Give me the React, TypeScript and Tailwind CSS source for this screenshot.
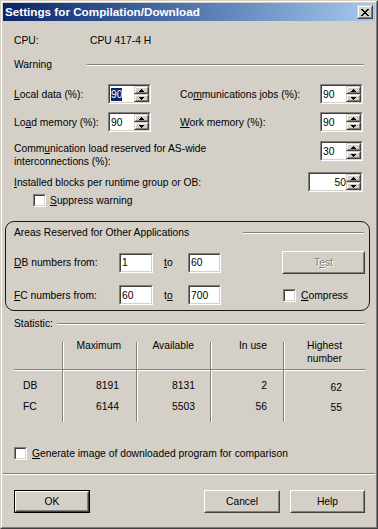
const sunkenOuter = "border border-t-[#808080] border-l-[#808080] border-r-white border-b-white";
const sunkenInner = "border border-t-[#404040] border-l-[#404040] border-r-[#d4d0c8] border-b-[#d4d0c8]";
const raisedOuter = "border border-t-[#d4d0c8] border-l-[#d4d0c8] border-r-[#404040] border-b-[#404040]";
const raisedInner = "border border-t-white border-l-white border-r-[#808080] border-b-[#808080]";

function Arrow({ up }: { up?: boolean }) {
  return (
    <svg width="5" height="3" viewBox="0 0 5 3" shapeRendering="crispEdges" fill="#000">
      {up ? (
        <>
          <rect x="2" y="0" width="1" height="1" />
          <rect x="1" y="1" width="3" height="1" />
          <rect x="0" y="2" width="5" height="1" />
        </>
      ) : (
        <>
          <rect x="0" y="0" width="5" height="1" />
          <rect x="1" y="1" width="3" height="1" />
          <rect x="2" y="2" width="1" height="1" />
        </>
      )}
    </svg>
  );
}

function SpinHalf({ up }: { up?: boolean }) {
  return (
    <div className={`${raisedOuter} h-[8px]`}>
      <div className={`${raisedInner} h-full bg-[#d4d0c8] flex items-center justify-center`}>
        <Arrow up={up} />
      </div>
    </div>
  );
}

function SpinField({
  value,
  className,
  selected,
  alignRight,
}: {
  value: string;
  className: string;
  selected?: boolean;
  alignRight?: boolean;
}) {
  return (
    <div className={`${sunkenOuter} ${className} h-[20px] shrink-0`}>
      <div className={`${sunkenInner} h-full flex bg-white`}>
        <div className={`flex-1 flex items-center ${alignRight ? "justify-end" : "pl-[1px]"}`}>
          <span className={selected ? "bg-[#0a246a] text-white" : ""}>{value}</span>
        </div>
        <div className="w-[15px] flex flex-col">
          <SpinHalf up />
          <SpinHalf />
        </div>
      </div>
    </div>
  );
}

function Edit({ value, className }: { value: string; className: string }) {
  return (
    <div className={`${sunkenOuter} ${className} h-[20px] shrink-0`}>
      <div className={`${sunkenInner} h-full bg-white flex items-center pl-[1px]`}>{value}</div>
    </div>
  );
}

function Check() {
  return (
    <div className={`${sunkenOuter} w-[13px] h-[13px] shrink-0`}>
      <div className={`${sunkenInner} h-full bg-white`} />
    </div>
  );
}

function Etched({ className = "" }: { className?: string }) {
  return <div className={`h-[2px] border-t border-t-[#808080] border-b border-b-white ${className}`} />;
}

function Button({ children, className, isDefault, disabled }: {
  children: React.ReactNode;
  className: string;
  isDefault?: boolean;
  disabled?: boolean;
}) {
  const face = (
    <div className="h-full border border-t-white border-l-white border-r-[#404040] border-b-[#404040]">
      <div className="h-full border border-t-[#d4d0c8] border-l-[#d4d0c8] border-r-[#808080] border-b-[#808080] flex items-center justify-center">
        <span className={disabled ? "text-[#808080] [text-shadow:1px_1px_0_#fff]" : ""}>{children}</span>
      </div>
    </div>
  );
  return (
    <div className={`${className} h-[23px] shrink-0 ${isDefault ? "border border-black" : ""}`}>{face}</div>
  );
}

function CloseX() {
  const px = [
    [0, 0], [1, 0], [6, 0], [7, 0],
    [1, 1], [2, 1], [5, 1], [6, 1],
    [2, 2], [3, 2], [4, 2], [5, 2],
    [3, 3], [4, 3],
    [2, 4], [3, 4], [4, 4], [5, 4],
    [1, 5], [2, 5], [5, 5], [6, 5],
    [0, 6], [1, 6], [6, 6], [7, 6],
  ];
  return (
    <svg width="8" height="7" viewBox="0 0 8 7" shapeRendering="crispEdges" fill="#000">
      {px.map(([x, y]) => (
        <rect key={`${x}-${y}`} x={x} y={y} width="1" height="1" />
      ))}
    </svg>
  );
}

const stats = [
  { name: "DB", max: "8191", avail: "8131", used: "2", highest: "62" },
  { name: "FC", max: "6144", avail: "5503", used: "56", highest: "55" },
];

export default function App() {
  return (
    <div className="w-[378px] h-[529px] bg-[#d4d0c8] text-black text-[10.3px] leading-[13px] font-['Liberation_Sans',Arial,sans-serif] border border-t-[#d4d0c8] border-l-[#d4d0c8] border-r-[#404040] border-b-[#404040]">
      <div className="h-full border border-t-white border-l-white border-r-[#808080] border-b-[#808080] p-[1px] flex flex-col">
        {/* Title bar */}
        <div className="h-[18px] shrink-0 bg-linear-to-r from-[#0a246a] to-[#a6caf0] flex items-center pl-[2px] pr-[2px]">
          <span className="text-white font-bold text-[11.7px] leading-[14px]">Settings for Compilation/Download</span>
          <div className={`ml-auto w-[16px] h-[14px] ${raisedOuter}`}>
            <div className={`${raisedInner} h-full bg-[#d4d0c8] flex items-center justify-center`}>
              <CloseX />
            </div>
          </div>
        </div>

        {/* Body */}
        <div className="flex flex-col pl-[11px] pr-[10px]">
          <div className="mt-[13px] flex h-[13px]">
            <span className="w-[76px]">CPU:</span>
            <span>CPU 417-4 H</span>
          </div>

          <div className="mt-[11px] flex items-center h-[13px]">
            <span className="w-[73px]">Warning</span>
            <Etched className="flex-1 mr-[1px]" />
          </div>

          <div className="mt-[13px] flex items-center h-[20px]">
            <span className="w-[94px]"><u>L</u>ocal data (%):</span>
            <SpinField value="90" selected className="w-[43px]" />
            <span className="ml-[29px] w-[140px]">Co<u>m</u>munications jobs (%):</span>
            <SpinField value="90" className="w-[43px]" />
          </div>

          <div className="mt-[8px] flex items-center h-[20px]">
            <span className="w-[94px]">Lo<u>a</u>d memory (%):</span>
            <SpinField value="90" className="w-[43px]" />
            <span className="ml-[29px] w-[140px]"><u>W</u>ork memory (%):</span>
            <SpinField value="90" className="w-[43px]" />
          </div>

          <div className="mt-[9px] flex items-start">
            <span className="w-[306px] pt-[1px]">
              Comm<u>u</u>nication load reserved for AS-wide
              <br />
              interconnections (%):
            </span>
            <SpinField value="30" className="w-[43px]" />
          </div>

          <div className="mt-[4px] flex items-center h-[20px]">
            <span className="w-[294px]"><u>I</u>nstalled blocks per runtime group or OB:</span>
            <SpinField value="50" alignRight className="w-[55px]" />
          </div>

          <div className="mt-[2px] flex items-center h-[13px] pl-[19px] gap-[4px]">
            <Check />
            <span><u>S</u>uppress warning</span>
          </div>

          {/* Areas reserved */}
          <div className="mt-[14px] -ml-[9px] -mr-[5px] border border-[#1a1a1a] rounded-[9px] pl-[8px] pr-[4px] pt-[4px] pb-[5px] flex flex-col">
            <div className="flex items-center h-[13px]">
              <span className="w-[229px]">Areas Reserved for Other Applications</span>
              <Etched className="flex-1 mr-[1px]" />
            </div>
            <div className="mt-[12px] flex items-center h-[23px]">
              <span className="w-[105px]"><u>D</u>B numbers from:</span>
              <Edit value="1" className="w-[34px]" />
              <span className="ml-[11px] w-[24px]"><u>t</u>o</span>
              <Edit value="60" className="w-[33px]" />
              <Button disabled className="ml-auto w-[83px]">T<u>e</u>st</Button>
            </div>
            <div className="mt-[11px] flex items-center h-[20px]">
              <span className="w-[105px]"><u>F</u>C numbers from:</span>
              <Edit value="60" className="w-[34px]" />
              <span className="ml-[11px] w-[24px]">t<u>o</u></span>
              <Edit value="700" className="w-[33px]" />
              <div className="ml-[62px] flex items-center gap-[5px]">
                <Check />
                <span><u>C</u>ompress</span>
              </div>
            </div>
          </div>

          {/* Statistic */}
          <div className="mt-[6px] flex items-center h-[13px]">
            <span className="w-[43px]">Statistic:</span>
            <Etched className="flex-1" />
          </div>

          <div className="mt-[12px] grid grid-cols-[48px_74px_74px_73px_82px]">
            <div className="flex flex-col">
              <div className="h-[27px]" />
              <Etched />
              <div className="h-[51px] pt-[8px] pl-[9px] flex flex-col gap-[8px]">
                {stats.map((s) => (
                  <span key={s.name}>{s.name}</span>
                ))}
              </div>
            </div>
            {[
              { head: ["Maximum"], key: "max" as const, hp: "pr-[15px]", vp: "pr-[17px] pt-[8px] gap-[8px]" },
              { head: ["Available"], key: "avail" as const, hp: "pr-[16px]", vp: "pr-[15px] pt-[8px] gap-[8px]" },
              { head: ["In use"], key: "used" as const, hp: "pr-[16px]", vp: "pr-[16px] pt-[8px] gap-[8px]" },
              { head: ["Highest", "number"], key: "highest" as const, hp: "pr-[23px]", vp: "pr-[23px] pt-[10px] gap-[7px]" },
            ].map((c) => (
              <div key={c.key} className="flex flex-col border-l border-l-[#808080] shadow-[inset_1px_0_0_#fff]">
                <div className={`h-[27px] flex flex-col items-end ${c.hp}`}>
                  <div className="-mt-[3px] flex flex-col items-end">
                    {c.head.map((h) => (
                      <span key={h}>{h}</span>
                    ))}
                  </div>
                </div>
                <Etched />
                <div className={`h-[51px] flex flex-col items-end ${c.vp}`}>
                  {stats.map((s) => (
                    <span key={s.name}>{s[c.key]}</span>
                  ))}
                </div>
              </div>
            ))}
          </div>

          <div className="mt-[25px] flex items-center h-[13px] gap-[5px]">
            <Check />
            <span><u>G</u>enerate image of downloaded program for comparison</span>
          </div>

          <Etched className="mt-[13px] -ml-[11px] -mr-[10px]" />

          <div className="mt-[15px] flex">
            <Button isDefault className="w-[76px]">OK</Button>
            <Button className="ml-auto w-[76px]">Cancel</Button>
            <Button className="ml-[10px] w-[75px]">Help</Button>
          </div>
        </div>
      </div>
    </div>
  );
}
